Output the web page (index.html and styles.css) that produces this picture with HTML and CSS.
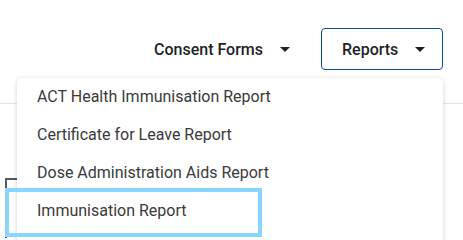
FILE: index.html
```html
<!DOCTYPE html>
<html>
<head>
<meta charset="utf-8">
<link rel="stylesheet" href="styles.css">
</head>
<body>
<div class="page">
  <header class="topbar">
    <nav class="nav">
      <button class="nav-btn">Consent Forms <span class="caret"></span></button>
      <button class="nav-btn nav-btn--outlined">Reports <span class="caret"></span></button>
    </nav>
  </header>
  <main class="content">
    <div class="card"></div>
  </main>
  <ul class="menu">
    <li class="menu-item">ACT Health Immunisation Report</li>
    <li class="menu-item">Certificate for Leave Report</li>
    <li class="menu-item">Dose Administration Aids Report</li>
    <li class="menu-item">Immunisation Report</li>
  </ul>
  <div class="highlight"></div>
</div>
</body>
</html>
```
FILE: styles.css
```css
* { box-sizing: border-box; }
html, body { margin: 0; padding: 0; background: #fff; }
body {
  font-family: Roboto, "Liberation Sans", sans-serif;
  width: 463px;
  height: 240px;
  overflow: hidden;
}
.page { position: relative; height: 240px; overflow: hidden; }
.topbar {
  height: 104px;
  border-bottom: 1px solid #e4e4e4;
  padding: 28px 20px 0 0;
  display: flex;
  justify-content: flex-end;
}
.nav { display: flex; align-items: flex-start; gap: 12px; height: 42px; }
.nav-btn {
  font-family: inherit;
  font-size: 16px;
  font-weight: 500;
  color: #1d1f2b;
  background: none;
  border: 1px solid transparent;
  border-radius: 4px;
  height: 42px;
  padding: 0 18px 0 20px;
  display: flex;
  align-items: center;
  gap: 17px;
  cursor: pointer;
}
.nav-btn--outlined {
  border-color: #0b4e98;
  width: 122px;
  padding-left: 20px;
}
.caret {
  width: 0; height: 0;
  border-left: 5px solid transparent;
  border-right: 5px solid transparent;
  border-top: 5px solid #1d1f2b;
  margin-top: 1px;
}
.content { padding: 74px 0 0 5px; }
.card {
  width: 300px;
  height: 60px;
  border-top: 2px solid #5a5a5a;
  border-left: 2px solid #5a5a5a;
}
.menu {
  position: absolute;
  top: 78px;
  left: 17px;
  right: 20px;
  margin: 0;
  padding: 0;
  list-style: none;
  background: #fff;
  border-radius: 5px;
  box-shadow: 0 1px 5px rgba(0,0,0,0.18);
  height: 180px;
}
.menu-item {
  height: 38px;
  line-height: 38px;
  padding-left: 20px;
  font-size: 16px;
  color: #3a3a3a;
}
.highlight {
  position: absolute;
  left: 5px;
  top: 188px;
  width: 257px;
  height: 49px;
  border: 4px solid #86d6fd;
}
```
